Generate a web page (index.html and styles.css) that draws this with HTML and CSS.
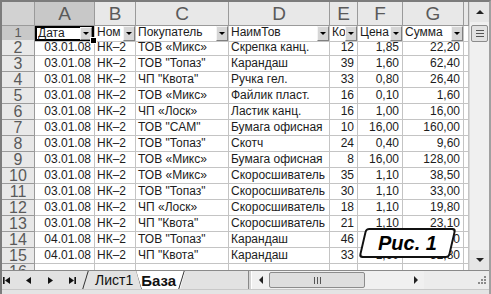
FILE: index.html
```html
<!DOCTYPE html>
<html>
  <head>
    <meta charset="utf-8">
    <link rel="stylesheet" href="styles.css">
  </head>
  <body>
    <div class="excel">
      <div class="sheet">
        <div class="grid">
          <div class="row head">
            <div class="corner"></div>
            <div class="colhead sel">A</div>
            <div class="colhead">B</div>
            <div class="colhead">C</div>
            <div class="colhead">D</div>
            <div class="colhead">E</div>
            <div class="colhead">F</div>
            <div class="colhead">G</div>
            <div class="colhead"></div>
          </div>
          <div class="row filters">
            <div class="rowhead sel">1</div>
            <div class="cell flt active"><span>Дата</span><b class="dd"></b></div>
            <div class="cell flt"><span>Ном</span><b class="dd"></b></div>
            <div class="cell flt"><span>Покупатель</span><b class="dd"></b></div>
            <div class="cell flt"><span>НаимТов</span><b class="dd"></b></div>
            <div class="cell flt"><span>Ко</span><b class="dd"></b></div>
            <div class="cell flt"><span>Цена</span><b class="dd"></b></div>
            <div class="cell flt"><span>Сумма</span><b class="dd"></b></div>
            <div class="cell"></div>
          </div>
          <div id="body"></div>
        </div>
        <div class="vscroll">
          <div class="sbtn up"></div>
          <div class="thumb"></div>
          <div class="track"></div>
          <div class="sbtn down"></div>
        </div>
      </div>
      <div class="tabbar">
        <div class="nav">
          <svg width="7" height="7" viewBox="0 0 7 7"><rect x="0" y="0" width="1.6" height="7"/><path d="M7 0 L2 3.5 L7 7 Z"/></svg>
          <svg width="5" height="7" viewBox="0 0 5 7"><path d="M5 0 L0 3.5 L5 7 Z"/></svg>
          <svg width="5" height="7" viewBox="0 0 5 7"><path d="M0 0 L5 3.5 L0 7 Z"/></svg>
          <svg width="7" height="7" viewBox="0 0 7 7"><path d="M0 0 L5 3.5 L0 7 Z"/><rect x="5.4" y="0" width="1.6" height="7"/></svg>
        </div>
        <div class="tab list">Лист1</div>
        <div class="tab base">База</div>
        <div class="tabfill"></div>
        <div class="split"></div>
        <div class="hscroll">
          <div class="hbtn left"></div>
          <div class="hthumb"><i></i></div>
          <div class="htrack"></div>
          <div class="hbtn right"></div>
        </div>
        <div class="grip">
          <svg width="12" height="12" viewBox="0 0 12 12" fill="#8a8a8a">
            <rect x="9" y="1" width="2" height="2"/>
            <rect x="6" y="4" width="2" height="2"/><rect x="9" y="4" width="2" height="2"/>
            <rect x="3" y="7" width="2" height="2"/><rect x="6" y="7" width="2" height="2"/><rect x="9" y="7" width="2" height="2"/>
          </svg>
        </div>
      </div>
      <div class="fig"><span>Рис. 1</span></div>
    </div>
    <script>
      const rows = [
        ["03.01.08", "НК–2", "ТОВ «Микс»", "Скрепка канц.", "12", "1,85", "22,20"],
        ["03.01.08", "НК–2", "ТОВ \"Топаз\"", "Карандаш", "39", "1,60", "62,40"],
        ["03.01.08", "НК–2", "ЧП \"Квота\"", "Ручка гел.", "33", "0,80", "26,40"],
        ["03.01.08", "НК–2", "ТОВ «Микс»", "Файлик пласт.", "16", "0,10", "1,60"],
        ["03.01.08", "НК–2", "ЧП «Лоск»", "Ластик канц.", "16", "1,00", "16,00"],
        ["03.01.08", "НК–2", "ТОВ \"САМ\"", "Бумага офисная", "10", "16,00", "160,00"],
        ["03.01.08", "НК–2", "ТОВ \"Топаз\"", "Скотч", "24", "0,40", "9,60"],
        ["03.01.08", "НК–2", "ТОВ «Микс»", "Бумага офисная", "8", "16,00", "128,00"],
        ["03.01.08", "НК–2", "ТОВ «Микс»", "Скоросшиватель", "35", "1,10", "38,50"],
        ["03.01.08", "НК–2", "ТОВ \"Топаз\"", "Скоросшиватель", "30", "1,10", "33,00"],
        ["03.01.08", "НК–2", "ЧП «Лоск»", "Скоросшиватель", "18", "1,10", "19,80"],
        ["03.01.08", "НК–2", "ЧП \"Квота\"", "Скоросшиватель", "21", "1,10", "23,10"],
        ["04.01.08", "НК–2", "ТОВ \"Топаз\"", "Карандаш", "46", "1,60", "73,60"],
        ["04.01.08", "НК–2", "ЧП \"Квота\"", "Карандаш", "33", "1,60", "52,80"],
        ["", "", "", "", "", "", ""]
      ];
      const right = [true, false, false, false, true, true, true];
      let html = "";
      rows.forEach((r, i) => {
        html += `<div class="row"><div class="rowhead">${i + 2}</div>`;
        r.forEach((v, j) => {
          html += `<div class="cell${right[j] ? " r" : ""}">${v}</div>`;
        });
        html += `<div class="cell"></div></div>`;
      });
      document.querySelector("#body").innerHTML = html;
    </script>
  </body>
</html>
```

FILE: styles.css
```css
* {
  margin: 0;
  padding: 0;
  box-sizing: border-box;
}
body {
  background-color: #fff;
  font-family: "Liberation Sans", Arial, sans-serif;
}
.excel {
  position: relative;
  width: 491px;
  height: 294px;
  display: flex;
  flex-direction: column;
  background-color: #e4e4e4;
  border-top: 2px solid #7c7c7c;
  border-left: 2px solid #7c7c7c;
  border-right: 2px solid #a0a0a0;
  overflow: hidden;
}
.sheet {
  display: flex;
  height: 268px;
}
.grid {
  width: 467px;
  overflow: hidden;
  background-color: #fff;
}
.row {
  display: grid;
  grid-template-columns: 33px 60px 41px 93px 101px 28px 45px 61px 5px;
  height: 16px;
}
.row.head {
  height: 24px;
}
.row.filters {
  height: 14px;
}
.row > div {
  border-right: 1px solid #c4c4c4;
  border-bottom: 1px solid #c4c4c4;
  overflow: hidden;
  white-space: nowrap;
  font-size: 12px;
  line-height: 15px;
  padding: 0 2px;
  color: #1c1c1c;
}
.cell.r {
  text-align: right;
  padding-right: 3px;
}
.corner {
  background-color: #d2d2d2;
  border-color: #9a9a9a !important;
}
.colhead {
  background-color: #e8e8e8;
  border-color: #9a9a9a !important;
  text-align: center;
  font-size: 19px !important;
  line-height: 24px !important;
  color: #5a5a5a !important;
}
.rowhead {
  background-color: #e8e8e8;
  border-color: #9a9a9a !important;
  text-align: center;
  font-size: 16px !important;
  line-height: 15px !important;
  color: #5a5a5a !important;
}
.row > .sel {
  background-color: #c8c8c8;
}
.filters .rowhead {
  font-size: 13px !important;
  line-height: 13px !important;
}
.cell.flt {
  display: flex;
  padding: 0 0 0 2px;
  line-height: 13px;
}
.flt span {
  flex: 1;
  overflow: hidden;
}
.dd {
  flex: none;
  width: 12px;
  display: flex;
  align-items: center;
  justify-content: center;
  background-color: #d6d6d6;
  border: 1px solid;
  border-color: #f4f4f4 #808080 #808080 #f4f4f4;
}
.dd::after {
  content: "";
  border-left: 3px solid transparent;
  border-right: 3px solid transparent;
  border-top: 3px solid #000;
}
.row > .active {
  position: relative;
  overflow: visible;
  z-index: 2;
  box-shadow: inset 0 0 0 2px #000;
  padding: 1px 2px 1px 3px;
}
.active::after {
  content: "";
  position: absolute;
  right: -3px;
  bottom: -3px;
  width: 5px;
  height: 5px;
  background-color: #000;
  border: 1px solid #fff;
}
.vscroll {
  width: 20px;
  display: flex;
  flex-direction: column;
  background-color: #f0f0f0;
  border-left: 1px solid #d8d8d8;
}
.sbtn {
  height: 20px;
  display: flex;
  align-items: center;
  justify-content: center;
  background-color: #e6e6e6;
}
.sbtn.up::after {
  content: "";
  border-left: 4px solid transparent;
  border-right: 4px solid transparent;
  border-bottom: 4px solid #222;
}
.sbtn.down::after {
  content: "";
  border-left: 4px solid transparent;
  border-right: 4px solid transparent;
  border-top: 4px solid #222;
}
.thumb {
  height: 17px;
  margin: 3px 1px 0;
  border: 1px solid #8c8c8c;
  border-radius: 2px;
  background-color: #e2e2e2;
  display: flex;
  align-items: center;
  justify-content: center;
}
.thumb::after {
  content: "";
  width: 8px;
  height: 7px;
  background: repeating-linear-gradient(#555 0 1px, transparent 1px 3px);
}
.track {
  flex: 1;
}
.tabbar {
  height: 20px;
  display: flex;
  background-color: #e2e2e2;
  border-top: 1px solid #8a8a8a;
  border-bottom: 1px solid #c8c8c8;
}
.nav {
  width: 78px;
  padding: 0 4px 0 1px;
  display: flex;
  align-items: center;
  justify-content: space-between;
}
.nav svg {
  fill: #111;
}
.tab {
  position: relative;
  display: flex;
  align-items: center;
  font-size: 14px;
  color: #111;
}
.tab.list {
  padding: 0 3px 0 15px;
}
.tab.list::before {
  content: "";
  position: absolute;
  left: 5px;
  top: 0;
  bottom: 0;
  border-left: 1px solid #333;
  transform: skewX(-17deg);
}
.tab.base {
  padding: 0 9px 0 5px;
  font-weight: bold;
  font-size: 15px;
  background-color: #fff;
  clip-path: polygon(0 0, 100% 0, calc(100% - 5px) 100%, 5px 100%);
}
.tab.base::before,
.tab.base::after {
  content: "";
  position: absolute;
  top: 0;
  bottom: 0;
  border-left: 1px solid #333;
}
.tab.base::before {
  left: 2px;
  transform: skewX(17deg);
}
.tab.base::after {
  right: 3px;
  transform: skewX(-17deg);
}
.tabfill {
  flex: 1;
}
.split {
  width: 4px;
  border-left: 1px solid #888;
  border-right: 1px solid #fff;
  background-color: #d4d4d4;
}
.hscroll {
  width: 172px;
  display: flex;
  background-color: #f0f0f0;
}
.hbtn {
  width: 17px;
  display: flex;
  align-items: center;
  justify-content: center;
}
.hbtn.left::after {
  content: "";
  border-top: 4px solid transparent;
  border-bottom: 4px solid transparent;
  border-right: 4px solid #222;
}
.hbtn.right::after {
  content: "";
  border-top: 4px solid transparent;
  border-bottom: 4px solid transparent;
  border-left: 4px solid #222;
}
.hthumb {
  width: 96px;
  margin: 1px 0;
  border: 1px solid #8c8c8c;
  border-radius: 2px;
  background-color: #dedede;
  display: flex;
  align-items: center;
  justify-content: center;
}
.hthumb i {
  width: 7px;
  height: 7px;
  background: repeating-linear-gradient(90deg, #555 0 1px, transparent 1px 3px);
}
.htrack {
  flex: 1;
}
.grip {
  flex: 1;
  display: flex;
  align-items: flex-end;
  justify-content: flex-end;
  padding: 0 2px 2px 0;
  background-color: #ececec;
}
.fig {
  position: absolute;
  left: 360px;
  top: 226px;
  width: 91px;
  height: 30px;
}
.fig::before {
  content: "";
  position: absolute;
  inset: 0;
  background-color: #fff;
  border: 2px solid #111;
  border-radius: 4px;
  transform: skewX(-13deg);
}
.fig span {
  position: relative;
  display: block;
  text-align: center;
  font-size: 20px;
  font-weight: bold;
  font-style: italic;
  line-height: 30px;
  color: #000;
}
```
